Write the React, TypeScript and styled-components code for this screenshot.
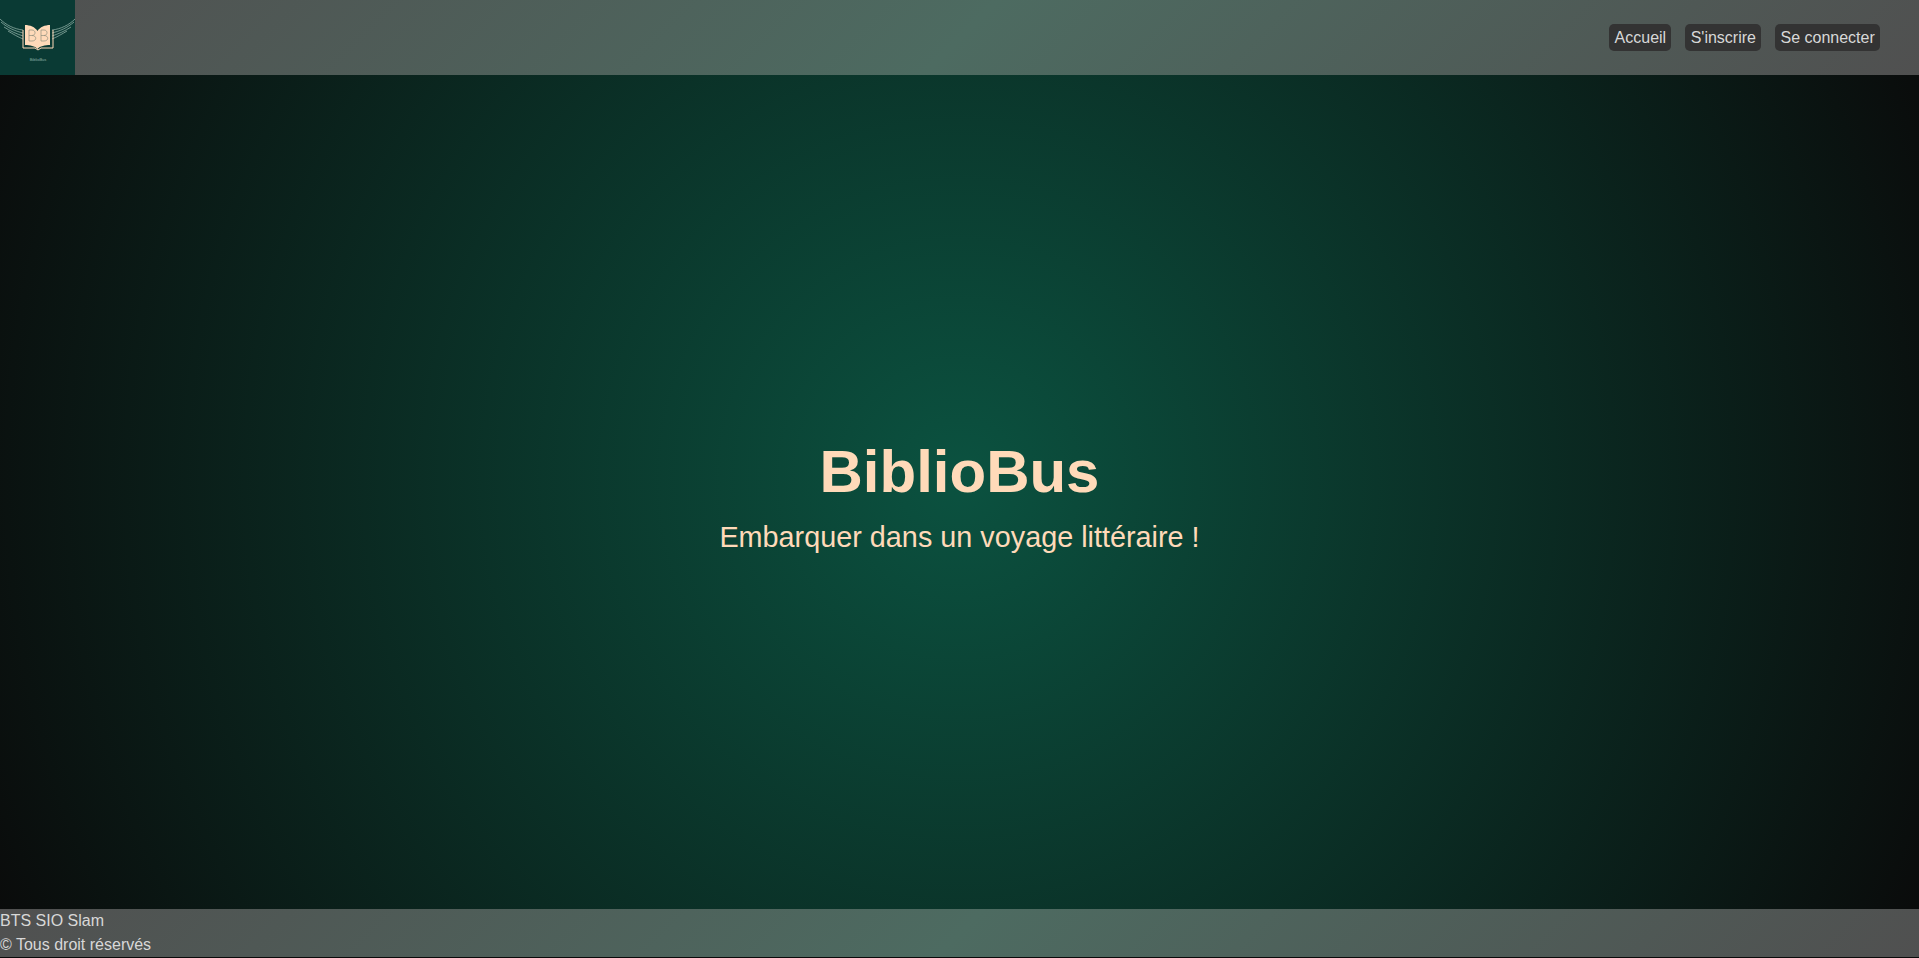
import React from "react";
import styled, { createGlobalStyle } from "styled-components";

const GlobalStyle = createGlobalStyle`
  html, body {
    margin: 0;
    padding: 0;
    height: 100%;
    background: #0a0a0a;
    font-family: "Liberation Sans", Arial, sans-serif;
  }
`;

const Logo = () => (
  <svg width="75" height="75" viewBox="0 0 75 75">
    <rect width="75" height="75" fill="#0a3a34" />
    <g fill="none" stroke="#9dbcb2" strokeWidth="0.7">
      <path d="M0 19 C6 25 14 29 23 30 M1 22 C8 28 15 31 23 33 M4 27 C10 31 17 34 23 36 M8 31 C13 34 18 37 23 39" />
      <path d="M75 19 C69 25 61 29 52 30 M74 22 C67 28 60 31 52 33 M71 27 C65 31 58 34 52 36 M67 31 C62 34 57 37 52 39" />
    </g>
    <path d="M23 30 V48 H35 L38 50 L41 48 H53 V30" fill="none" stroke="#ffdab9" strokeWidth="1" />
    <path d="M25 25 C30 25 35 27 37.5 31 C40 27 45 25 50 25 V45 C45 45 40 46 37.5 49 C35 46 30 45 25 45 Z" fill="#ffdab9" />
    <g fill="none" stroke="#8f8f7e" strokeWidth="0.7">
      <path d="M29 30 V41 M29 30 H32 C36 30 36 35.5 32 35.5 H29 M32 35.5 C37 35.5 37 41 32 41 H29" />
      <path d="M41 30 V41 M41 30 H44 C48 30 48 35.5 44 35.5 H41 M44 35.5 C49 35.5 49 41 44 41 H41" />
    </g>
    <text x="38" y="61" fontSize="4" textAnchor="middle" fill="#8fb0a6" fontFamily="Liberation Sans, sans-serif">
      BiblioBus
    </text>
  </svg>
);

const Page = styled.div`
  display: flex;
  flex-direction: column;
  height: 957px;
  background: radial-gradient(circle farthest-corner at 50% 50%, #0b5240 0%, #0a0a0a 100%);
`;

const Header = styled.header`
  display: flex;
  align-items: center;
  justify-content: space-between;
  height: 75px;
  background: linear-gradient(135deg, #505050, #4d6b61 50%, #505050);
`;

const LogoLink = styled.a`
  display: block;
  width: 75px;
  height: 75px;
`;

const Nav = styled.nav`
  display: flex;
  gap: 14px;
  padding-right: 39px;
`;

const NavLink = styled.a`
  padding: 3px 5.25px;
  height: 21px;
  line-height: 21px;
  border-radius: 5px;
  background: #333333;
  color: #d8d8d8;
  font-size: 16px;
`;

const Main = styled.main`
  flex: 1;
  display: flex;
  flex-direction: column;
  align-items: center;
  justify-content: center;
  padding-top: 4px;
  color: #ffdab9;
`;

const Title = styled.h1`
  margin: 0;
  font-size: 60px;
  font-weight: 700;
  line-height: 74px;
`;

const Subtitle = styled.p`
  margin: 12px 0 0;
  font-size: 28.8px;
  line-height: 33px;
`;

const Footer = styled.footer`
  height: 48px;
  background: linear-gradient(135deg, #505050, #4d6b61 50%, #505050);
  color: #d8d8d8;
  font-size: 16px;
  line-height: 24px;
`;

export default function App() {
  return (
    <>
      <GlobalStyle />
      <Page>
        <Header>
          <LogoLink>
            <Logo />
          </LogoLink>
          <Nav>
            <NavLink>Accueil</NavLink>
            <NavLink>S'inscrire</NavLink>
            <NavLink>Se connecter</NavLink>
          </Nav>
        </Header>
        <Main>
          <Title>BiblioBus</Title>
          <Subtitle>Embarquer dans un voyage littéraire !</Subtitle>
        </Main>
        <Footer>
          <div>BTS SIO Slam</div>
          <div>© Tous droit réservés</div>
        </Footer>
      </Page>
    </>
  );
}
